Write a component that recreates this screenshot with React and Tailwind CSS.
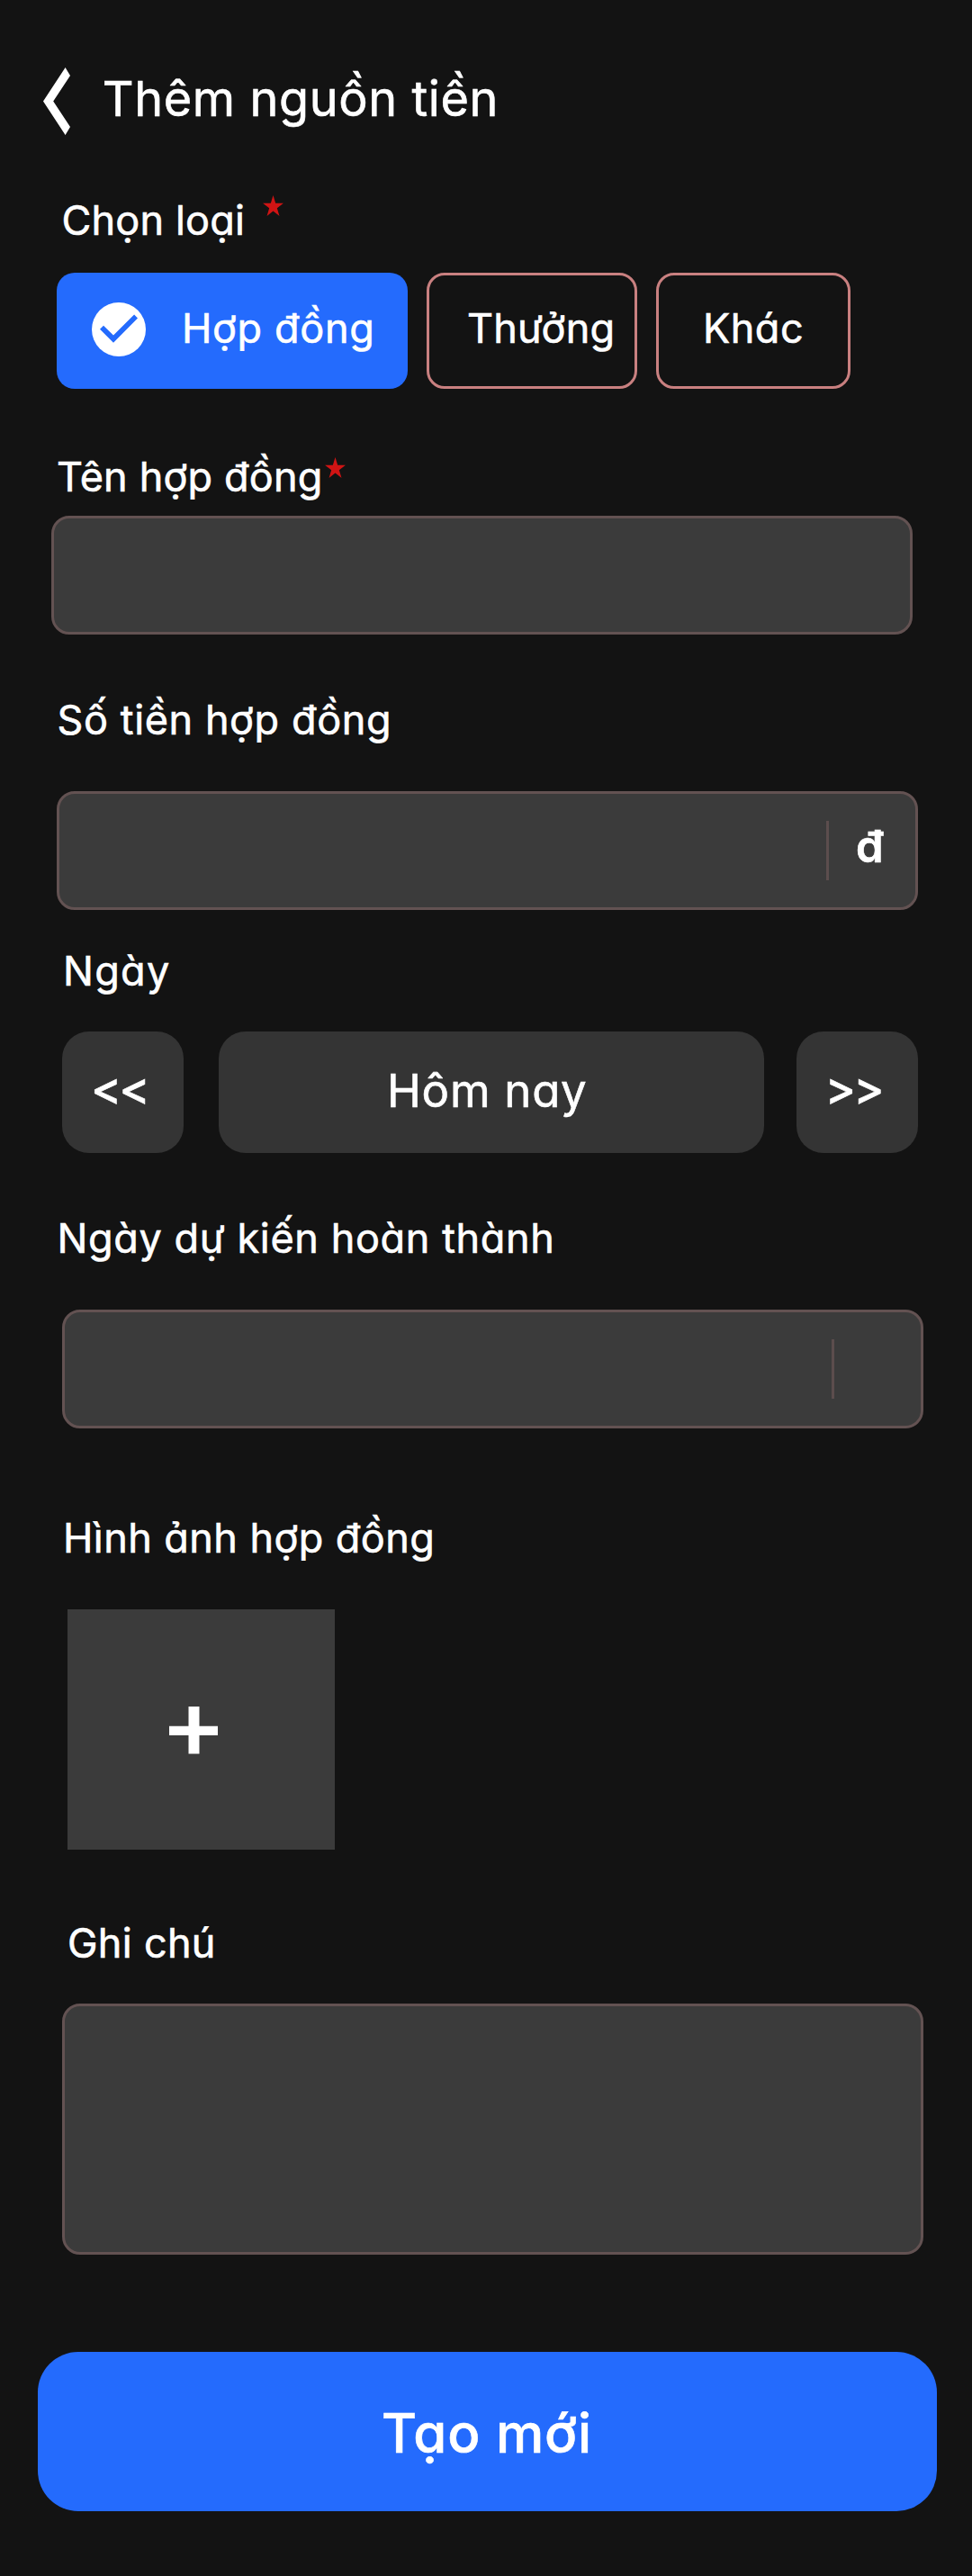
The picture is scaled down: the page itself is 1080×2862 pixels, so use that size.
function Star({ className }) {
  return (
    <svg viewBox="0 0 23.2 23.3" className={`h-[23px] w-[23px] shrink-0 ${className}`} aria-hidden="true">
      <polygon
        fill="#d01414"
        points="11.6,0 14.3,8.9 23.2,8.9 16,14.4 18.7,23.3 11.6,17.8 4.6,23.3 7.2,14.4 0,8.9 8.9,8.9"
      />
    </svg>
  );
}

function Label({ className, textClassName = "", children, star }) {
  return (
    <div className={`flex h-[60px] items-start whitespace-nowrap text-[45px] leading-[60px] ${className}`}>
      <span className={textClassName}>{children}</span>
      {star}
    </div>
  );
}

function Field({ className, label, suffix, divider }) {
  return (
    <div
      className={`flex h-[132px] w-[957px] items-center rounded-[20px] border-3 border-[#635252] bg-[#3b3b3b] ${className}`}
    >
      <input aria-label={label} className="h-full min-w-0 flex-1 bg-transparent px-6 text-[45px] outline-none" />
      {divider && <div className="h-[66px] w-[3px] bg-[#5c4d4d]" />}
      {divider && (
        <div className="w-[96px] pl-[30px]">
          {suffix && <div className="-mt-[10px] text-[49px] leading-[59px] font-semibold">{suffix}</div>}
        </div>
      )}
    </div>
  );
}

export default function App() {
  return (
    <main className="flex h-[2862px] w-[1080px] flex-col items-start overflow-hidden bg-[#131313] font-['Inter',sans-serif] text-white [-webkit-text-stroke:0.6px_#fff] [font-feature-settings:'cv11']">
      <header className="mt-[75px] flex h-[75px] items-start pl-[48px]">
        <svg viewBox="0 0 30 75" className="h-[75px] w-[30px]" aria-hidden="true">
          <polygon fill="#fff" points="24.6,0 30,9 11.2,37.5 30,66 24.6,75 0,37.5" />
        </svg>
        <h1 className="mt-[3px] ml-[35.7px] text-[54px] leading-[63px] tracking-[0.6px] whitespace-nowrap">
          Thêm nguồn tiền
        </h1>
      </header>

      <Label
        className="mt-[65px] ml-[68.6px] tracking-[0.15px]"
        textClassName="w-[223px]"
        star={<Star className="mt-[2px]" />}
      >
        Chọn loại
      </Label>
      <div className="mt-[28px] ml-[63px] flex h-[129px] gap-[21px] text-[45px] leading-[60px] whitespace-nowrap">
        <button className="flex w-[390px] items-start rounded-[20px] bg-[#246bfd] pl-[39px]">
          <svg viewBox="0 0 60 60" className="mt-[33px] h-[60px] w-[60px]" aria-hidden="true">
            <circle cx="30" cy="30" r="30" fill="#fff" />
            <polygon fill="#246bfd" points="9,29.8 13,25.7 24,36.5 47.1,13.6 51,17.6 24,44.7" />
          </svg>
          <span className="mt-[32px] ml-[40px] tracking-[0.65px]">Hợp đồng</span>
        </button>
        <button className="flex w-[234px] items-start rounded-[20px] border-3 border-[#c98080] pl-[42px]">
          <span className="mt-[29px] tracking-[0.2px]">Thưởng</span>
        </button>
        <button className="flex w-[216px] items-start rounded-[20px] border-3 border-[#c98080] pl-[49px]">
          <span className="mt-[29px] tracking-[0.5px]">Khác</span>
        </button>
      </div>

      <Label
        className="mt-[68px] ml-[63px] tracking-[0.17px]"
        textClassName="w-[297.5px]"
        star={<Star className="mt-[8px]" />}
      >
        Tên hợp đồng
      </Label>
      <Field className="mt-[13px] ml-[57px]" label="Tên hợp đồng" />

      <Label className="mt-[65px] ml-[63.5px] tracking-[0.6px]">Số tiền hợp đồng</Label>
      <Field className="mt-[49px] ml-[63px]" label="Số tiền hợp đồng" divider suffix="đ" />

      <Label className="mt-[38px] ml-[70px] tracking-[1.3px]">Ngày</Label>
      <div className="mt-[37px] ml-[69px] flex h-[135px] w-[951px] items-stretch text-[51px] leading-[59px] whitespace-nowrap">
        <button className="flex w-[135px] items-start rounded-[30px] bg-[#343434] pl-[32px] font-medium tracking-[-2.5px]">
          <span className="mt-[33px]">{"<<"}</span>
        </button>
        <button className="ml-[39px] flex w-[606px] items-start rounded-[30px] bg-[#343434] pl-[187px] tracking-[0.7px]">
          <span className="mt-[36px]">Hôm nay</span>
        </button>
        <button className="ml-[36px] flex w-[135px] items-start rounded-[30px] bg-[#343434] pl-[32px] font-medium tracking-[-2.5px]">
          <span className="mt-[33px]">{">>"}</span>
        </button>
      </div>

      <Label className="mt-[65px] ml-[63.5px] tracking-[0.62px]">Ngày dự kiến hoàn thành</Label>
      <Field className="mt-[49px] ml-[69px]" label="Ngày dự kiến hoàn thành" divider />

      <Label className="mt-[92px] ml-[70px] tracking-[0.43px]">Hình ảnh hợp đồng</Label>
      <button className="mt-[49px] ml-[75px] flex h-[267px] w-[297px] items-start bg-[#3b3b3b] pt-[108px] pl-[112.5px]">
        <svg viewBox="0 0 54.5 52.5" className="h-[52.5px] w-[54.5px]" aria-hidden="true">
          <path d="M21.5 0H33.5V21.7H54.5V32H33.5V52.5H21.5V32H0V21.7H21.5Z" fill="#fff" />
        </svg>
      </button>

      <Label className="mt-[74px] ml-[75px] tracking-[0.3px]">Ghi chú</Label>
      <textarea
        aria-label="Ghi chú"
        className="mt-[37px] ml-[69px] h-[279px] w-[957px] resize-none rounded-[20px] border-3 border-[#635252] bg-[#3b3b3b] p-6 text-[45px] outline-none"
      />

      <button className="mt-[108px] ml-[42px] flex h-[177px] w-[999px] items-start rounded-[45px] bg-[#246bfd] pl-[382px] text-[60px] leading-[70px] font-medium tracking-[0.8px] whitespace-nowrap">
        <span className="mt-[55px]">Tạo mới</span>
      </button>
    </main>
  );
}
